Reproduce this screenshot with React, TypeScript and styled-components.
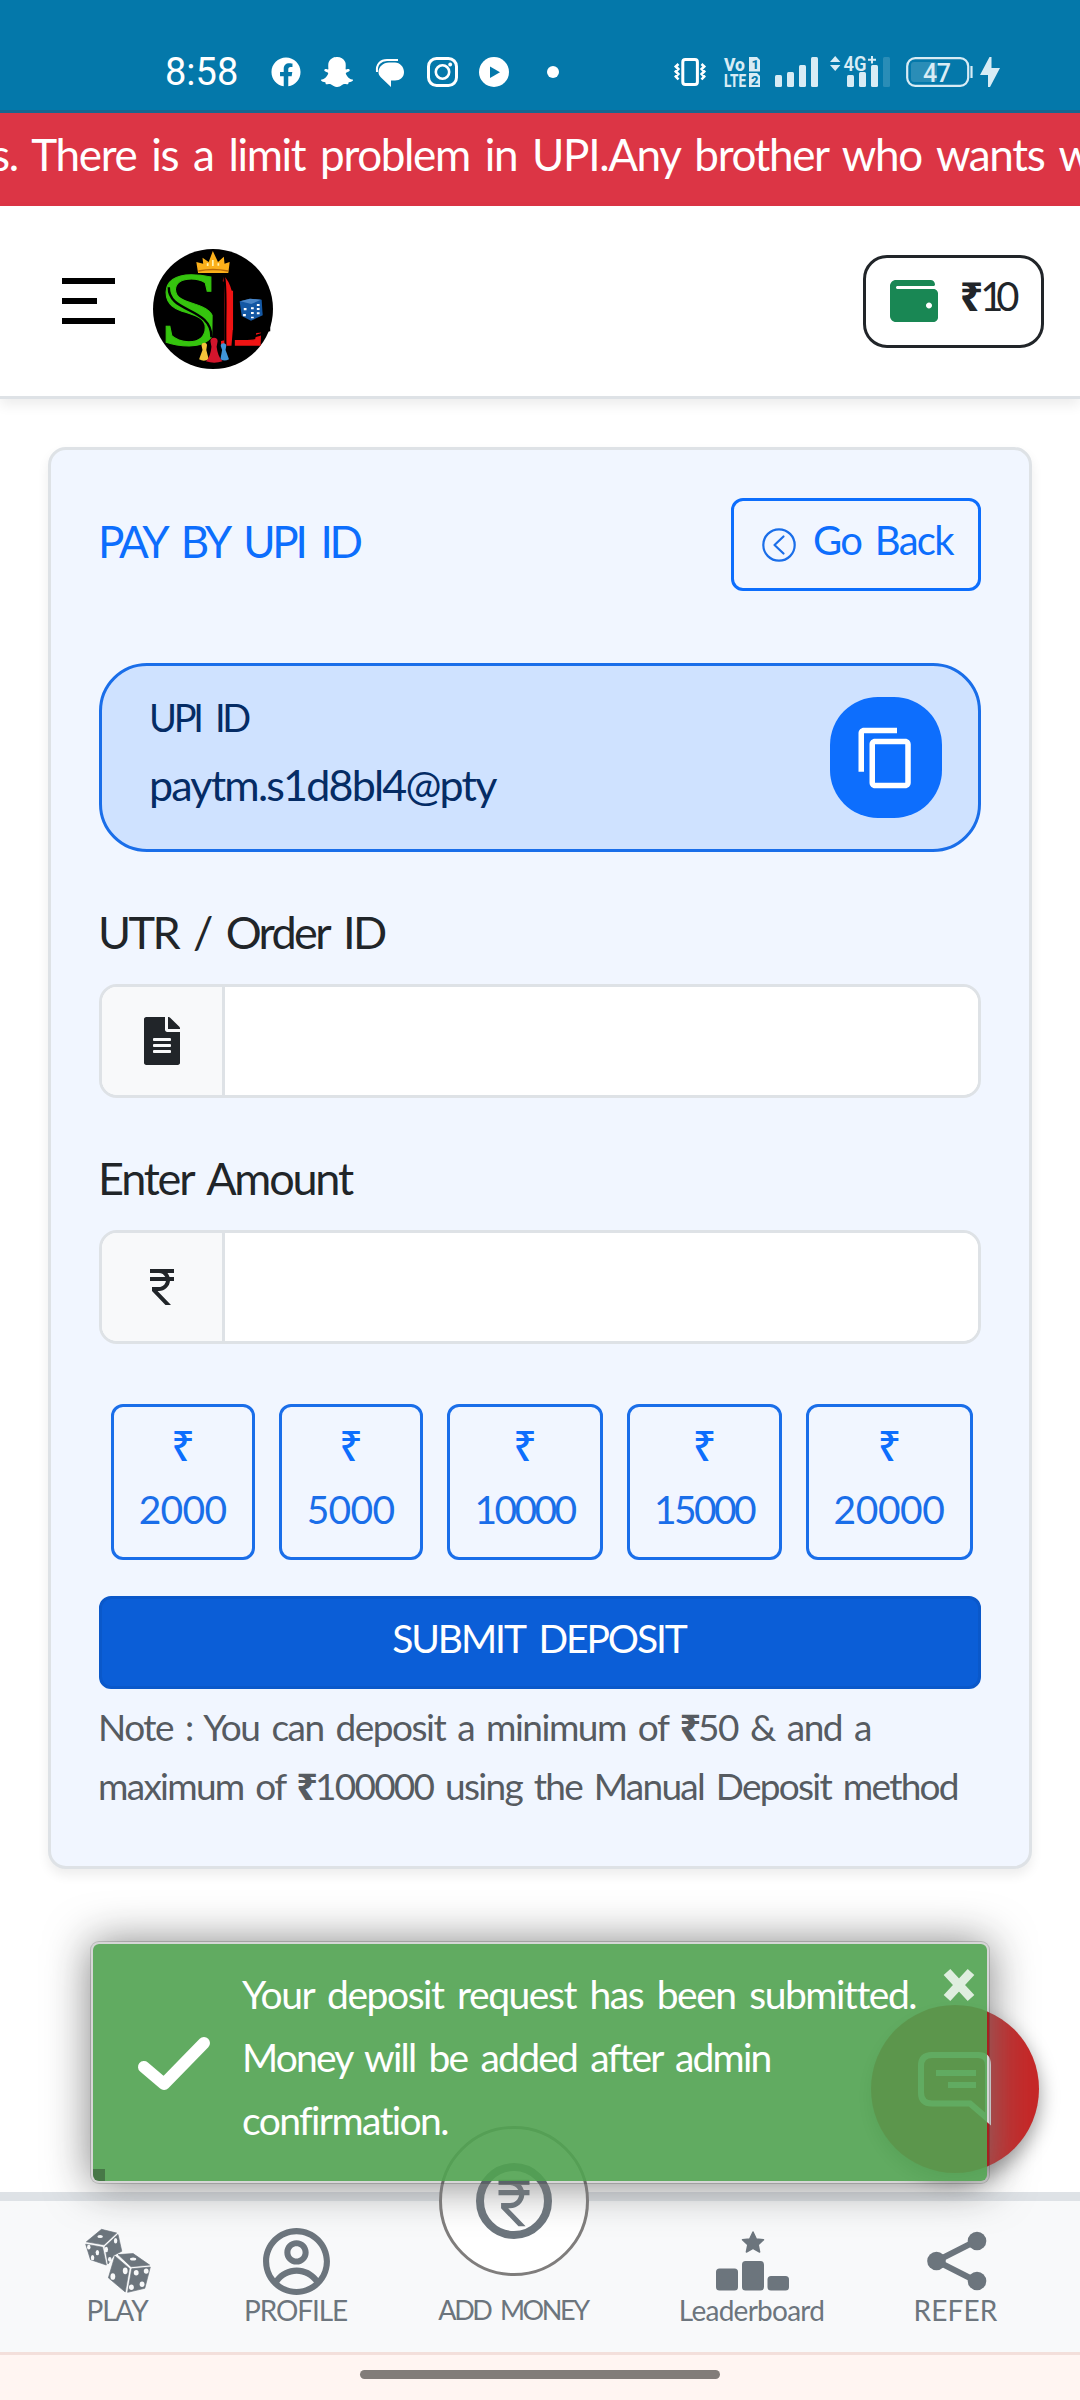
import React from 'react';
import styled, { createGlobalStyle } from 'styled-components';
import { FaFacebook, FaSnapchatGhost, FaWallet, FaFileAlt } from 'react-icons/fa';
import { CgProfile } from 'react-icons/cg';
import { MdContentCopy, MdCurrencyRupee } from 'react-icons/md';

const GlobalStyle = createGlobalStyle`
  * { box-sizing: border-box; }
  body { margin: 0; background: #fff; font-family: Lato, 'Open Sans', sans-serif; color: #212529; }
  button { font-family: inherit; background: none; cursor: pointer; }
  svg { display: block; flex: none; overflow: visible; }
`;

const Screen = styled.div`
  position: relative;
  width: 1080px;
  height: 2400px;
  overflow: hidden;
  display: flex;
  flex-direction: column;
`;

/* ---------- status bar ---------- */
const StatusBar = styled.div`
  height: 113px;
  flex: none;
  display: flex;
  justify-content: space-between;
  padding: 57px 80px 0 165px;
  background: #0478aa;
  border-bottom: 3px solid #17668f;
  color: #fff;
`;
const StatusGroup = styled.div`
  display: flex;
  align-items: center;
  height: 30px;
`;
const Slot = styled.span<{ $before: number }>`
  margin-left: ${(p) => p.$before}px;
`;
const Clock = styled.span`
  width: 86px;
  font: 400 38px/30px Roboto, sans-serif;
`;
const MoreDot = styled.span`
  display: block;
  width: 12px;
  height: 12px;
  border-radius: 50%;
  background: #fff;
`;

/* ---------- marquee and header ---------- */
const Marquee = styled.div`
  height: 93px;
  flex: none;
  padding-bottom: 12px;
  background: #dc3545;
  color: #fff;
  overflow: hidden;
  display: flex;
  align-items: center;
`;
const MarqueeText = styled.span`
  margin-left: -9px;
  white-space: nowrap;
  font-size: 44px;
  letter-spacing: -1.35px;
  word-spacing: 5px;
`;
const Header = styled.header`
  height: 193px;
  flex: none;
  display: flex;
  align-items: center;
  padding: 0 36px 0 62px;
  border-bottom: 3px solid #dee2e6;
  box-shadow: 0 6px 12px rgba(0, 0, 0, 0.075);
`;
const Menu = styled.button`
  display: flex;
  flex-direction: column;
  gap: 14px;
  width: 53px;
  padding: 0;
  border: 0;
`;
const MenuLine = styled.span<{ $w: number }>`
  width: ${(p) => p.$w}px;
  height: 6px;
  background: #000;
`;
const LogoBox = styled.div`
  margin: 15px auto 0 38px;
`;
const WalletButton = styled.button`
  width: 181px;
  height: 93px;
  display: flex;
  align-items: center;
  gap: 22px;
  padding: 0 0 0 24px;
  border: 3px solid #212529;
  border-radius: 24px;
  color: #198754;
`;
const WalletAmount = styled.span`
  padding-bottom: 10px;
  color: #212529;
  font-size: 40px;
  line-height: 50px;
  letter-spacing: -7px;
  white-space: nowrap;
`;
const Rupee = styled.span`
  font-family: 'Noto Sans', sans-serif;
  font-weight: 800;
  letter-spacing: -3px;
`;

/* ---------- deposit card ---------- */
const Card = styled.main`
  margin: 48px 48px 0;
  height: 1422px;
  flex: none;
  padding: 48px;
  display: flex;
  flex-direction: column;
  border: 3px solid #dee2e6;
  border-radius: 18px;
  background: #f1f6ff;
  box-shadow: 0 6px 12px rgba(0, 0, 0, 0.075);
`;
const CardHeader = styled.div`
  height: 93px;
  display: flex;
  justify-content: space-between;
  align-items: center;
`;
const CardTitle = styled.h1`
  margin: 0 0 0 -1px;
  padding-bottom: 8px;
  color: #0d6efd;
  font-weight: 400;
  font-size: 44px;
  letter-spacing: -3.3px;
  word-spacing: 8px;
`;
const BackButton = styled.button`
  width: 250px;
  height: 93px;
  display: flex;
  align-items: center;
  gap: 17px;
  padding: 0 0 0 28px;
  border: 3px solid #0d6efd;
  border-radius: 12px;
  color: #0d6efd;
  font-size: 40px;
  letter-spacing: -1.7px;
  word-spacing: 5px;
  white-space: nowrap;
`;
const BackText = styled.span`
  padding-bottom: 10px;
`;
const UpiBox = styled.section`
  margin-top: 72px;
  height: 189px;
  display: flex;
  justify-content: space-between;
  padding: 20px 36px 0 47px;
  border: 3px solid #1a6ee9;
  border-radius: 48px;
  background: #cfe2ff;
  color: #052c65;
`;
const UpiLabel = styled.div`
  font-size: 38px;
  line-height: 62px;
  letter-spacing: -3.3px;
  word-spacing: 8px;
`;
const UpiValue = styled.div`
  margin-top: 4px;
  font-size: 43px;
  line-height: 66px;
  letter-spacing: -1.8px;
`;
const CopyButton = styled.button`
  margin-top: 11px;
  width: 112px;
  height: 121px;
  display: flex;
  align-items: center;
  justify-content: center;
  border: 0;
  border-radius: 48px;
  background: #0d6efd;
  color: #fff;
`;
const FieldLabel = styled.label<{ $space: number }>`
  margin: 50px 0 22px -1px;
  font-size: 45px;
  line-height: 60px;
  letter-spacing: ${(p) => p.$space}px;
  word-spacing: 6px;
`;
const InputGroup = styled.div`
  height: 114px;
  flex: none;
  display: flex;
  border: 3px solid #dee2e6;
  border-radius: 18px;
  overflow: hidden;
  background: #fff;
`;
const Addon = styled.span`
  width: 123px;
  flex: none;
  display: flex;
  align-items: center;
  justify-content: center;
  border-right: 3px solid #dee2e6;
  background: #f8f9fa;
`;
const Input = styled.input`
  flex: 1;
  border: 0;
  outline: 0;
  background: #fff;
  font-size: 48px;
`;
const Presets = styled.div`
  display: flex;
  gap: 24px;
  margin: 60px 0 0 12px;
`;
const Preset = styled.button<{ $w: number }>`
  width: ${(p) => p.$w}px;
  height: 156px;
  flex: none;
  display: flex;
  flex-direction: column;
  align-items: center;
  padding: 7px 0 0;
  border: 3px solid #1a6ee9;
  border-radius: 12px;
  color: #1a6ee9;
`;
const PresetSign = styled.span`
  font: 500 41px/63px 'Noto Sans', sans-serif;
  color: #0d6efd;
`;
const PresetValue = styled.span<{ $space: number }>`
  margin-top: 1px;
  margin-left: -1px;
  font-size: 39px;
  line-height: 63px;
  letter-spacing: ${(p) => p.$space}px;
`;
const Submit = styled.button`
  margin-top: 36px;
  height: 93px;
  padding: 0 2px 10px 0;
  border: 3px solid #0a58ca;
  border-radius: 12px;
  background: #0b5ed7;
  color: #fff;
  font-size: 39px;
  letter-spacing: -2.1px;
  word-spacing: 7px;
`;
const Note = styled.p`
  margin: 8px 0 0 -1px;
  color: #565b61;
  font-size: 37px;
  line-height: 59px;
`;
const NoteLine = styled.span<{ $space: number }>`
  display: block;
  height: 59px;
  white-space: nowrap;
  word-spacing: 4px;
  letter-spacing: ${(p) => p.$space}px;
`;

/* ---------- bottom navigation ---------- */
const Nav = styled.nav`
  margin-top: auto;
  height: 160px;
  flex: none;
  display: grid;
  grid-template-columns: 178px 179px 256px 221px 187px;
  padding-left: 29px;
  border-top: 9px solid #dee2e6;
  background: #f8f9fa;
  color: #6c757d;
`;
const NavItem = styled.a`
  position: relative;
  display: flex;
  flex-direction: column;
  align-items: center;
  padding-top: 30px;
`;
const NavIcon = styled.span`
  height: 60px;
  display: flex;
  align-items: center;
`;
const NavLabel = styled.span<{ $space: number; $size?: number }>`
  font-size: ${(p) => p.$size ?? 28}px;
  line-height: 38px;
  letter-spacing: ${(p) => p.$space}px;
  word-spacing: 5px;
  margin-left: -2px;
  white-space: nowrap;
`;
const AddCircle = styled.span`
  position: absolute;
  top: -75px;
  left: 53px;
  width: 150px;
  height: 150px;
  display: flex;
  align-items: center;
  justify-content: center;
  border: 3px solid #7f7d7c;
  border-radius: 50%;
  background: #fff;
`;
const AddRing = styled.span`
  width: 76px;
  height: 76px;
  display: flex;
  align-items: center;
  justify-content: center;
  padding-top: 4px;
  border: 8px solid #6c757d;
  border-radius: 50%;
`;
const GestureBar = styled.div`
  height: 48px;
  flex: none;
  display: flex;
  justify-content: center;
  padding-top: 15px;
  border-top: 3px solid #f3dfdb;
  background: #fff5f2;
`;
const Handle = styled.span`
  width: 360px;
  height: 9px;
  border-radius: 5px;
  background: #827c79;
`;

/* ---------- floating elements ---------- */
const ChatButton = styled.button`
  position: absolute;
  left: 871px;
  top: 2005px;
  width: 168px;
  height: 168px;
  display: flex;
  justify-content: center;
  align-items: center;
  padding: 0;
  border: 0;
  border-radius: 50%;
  background: #c62828;
  box-shadow: 0 8px 20px rgba(0, 0, 0, 0.4);
`;
const Toast = styled.div`
  position: absolute;
  left: 90px;
  top: 1941px;
  width: 900px;
  height: 243px;
  display: flex;
  padding: 19px 0 0 45px;
  border: 3px solid rgba(0, 0, 0, 0.175);
  border-radius: 9px;
  background: #51a351;
  background-clip: padding-box;
  box-shadow: 0 1px 44px #777;
  opacity: 0.9;
  color: #fff;
`;
const ToastCheck = styled.span`
  width: 72px;
  padding-top: 72px;
  margin-right: 32px;
`;
const ToastText = styled.div`
  font-size: 39px;
  line-height: 63px;
  word-spacing: 5px;
`;
const ToastLine = styled.div<{ $space: number }>`
  white-space: nowrap;
  letter-spacing: ${(p) => p.$space}px;
`;
const ToastClose = styled.button`
  position: absolute;
  right: 13px;
  top: 24px;
  padding: 0;
  border: 0;
`;
const ToastProgress = styled.span`
  position: absolute;
  left: 0;
  bottom: 0;
  width: 12px;
  height: 12px;
  border-bottom-left-radius: 6px;
  background: rgba(0, 0, 0, 0.35);
`;

const ICE = '#d8ecf5';

const Messages = () => (
  <svg width="28" height="29" viewBox="0 0 28 29">
    <path d="M1 14C0 6 5 2 11 2H22" fill="none" stroke="#fff" strokeWidth="2" />
    <path d="M13 4.500H19C24 4.500 28 9 28 14C28 19.500 24 22.500 19 22.500H15V29L5 19.500C3 17.500 2.500 16 2.500 14C2.500 9 7 4.500 13 4.500Z" fill="#fff" />
  </svg>
);
const Camera = () => (
  <svg width="31" height="30" viewBox="0 0 31 30">
    <rect x="1.500" y="1.500" width="28" height="27" rx="8" fill="none" stroke="#fff" strokeWidth="3" />
    <circle cx="15.500" cy="15" r="6.700" fill="none" stroke="#fff" strokeWidth="2.600" />
    <circle cx="23.200" cy="7.500" r="1.900" fill="#fff" />
  </svg>
);
const PlayDisc = () => (
  <svg width="30" height="30" viewBox="0 0 30 30">
    <circle cx="15" cy="15" r="15" fill="#fff" />
    <path d="M11 9.500V21L21 15.200Z" fill="#0478aa" />
  </svg>
);
const Vibrate = () => (
  <svg width="32" height="30" viewBox="0 0 32 30" fill="none" stroke="#fff">
    <rect x="8.800" y="2.500" width="14.600" height="25" rx="2.500" strokeWidth="3" />
    <path d="M4.500 7 1.800 9.500 4.300 12 1.800 14.500 4.300 17 1.800 19.500 4.500 22.500M27.500 7 30.200 9.500 27.700 12 30.200 14.500 27.700 17 30.200 19.500 27.500 22.500" strokeWidth="2.600" />
  </svg>
);
const VoLte = () => (
  <svg width="36" height="30" viewBox="0 0 36 30" fontFamily="Roboto, sans-serif" fontWeight="800" fill={ICE}>
    <text x="0" y="14" fontSize="19" textLength="21" lengthAdjust="spacingAndGlyphs">Vo</text>
    <text x="0" y="30" fontSize="19" textLength="22" lengthAdjust="spacingAndGlyphs">LTE</text>
    <path d="M25 0H33L36 3V14.500H25ZM25 16H33L36 19V30H25Z" />
    <text x="27.500" y="12" fontSize="13" fill="#0478aa">1</text>
    <text x="27" y="27.500" fontSize="13" fill="#0478aa">2</text>
  </svg>
);
const Signal = () => (
  <svg width="43" height="30" viewBox="0 0 43 30" fill={ICE}>
    <rect x="0" y="18" width="7" height="12" rx="1.500" />
    <rect x="12" y="15" width="7" height="15" rx="1.500" />
    <rect x="24" y="8" width="7" height="22" rx="1.500" />
    <rect x="36" y="0" width="7" height="30" rx="1.500" />
  </svg>
);
const Signal4G = () => (
  <svg width="60" height="30" viewBox="0 2 60 30" fill={ICE}>
    <path d="M0 7 5.200 1 10.400 7ZM0 10 5.200 16 10.400 10Z" />
    <text x="13.500" y="15.500" fontFamily="Roboto, sans-serif" fontSize="21" fontWeight="600" textLength="23" lengthAdjust="spacingAndGlyphs">4G</text>
    <path d="M38 4.700H46M42 1V8.400" stroke={ICE} strokeWidth="2" />
    <rect x="17" y="20" width="7" height="12" rx="1.500" />
    <rect x="29" y="17" width="7" height="15" rx="1.500" />
    <rect x="41" y="10" width="7" height="22" rx="1.500" />
    <rect x="53" y="2" width="7" height="30" rx="1.500" opacity=".18" />
  </svg>
);
const Battery = () => (
  <svg width="68" height="30" viewBox="0 0 68 30">
    <rect x="5" y="5" width="26" height="20" rx="3" fill={ICE} opacity=".18" />
    <rect x="1.200" y="1.200" width="61" height="27.600" rx="8" fill="none" stroke={ICE} strokeWidth="2.200" />
    <path d="M65.500 9V21" stroke={ICE} strokeWidth="2.200" />
    <text x="17" y="24.500" fontFamily="Roboto, sans-serif" fontSize="25" fontWeight="500" fill={ICE} textLength="28">47</text>
  </svg>
);
const Bolt = () => (
  <svg width="20" height="30" viewBox="0 0 20 30">
    <path d="M9.500 0 0 18H8V30H10L20 11H11.500V0Z" fill={ICE} />
  </svg>
);

const Logo = () => (
  <svg width="120" height="120" viewBox="444 147 349 360" preserveAspectRatio="none">
    <ellipse cx="618.500" cy="327" rx="174.500" ry="180" fill="#000" />
    <g fontFamily="'Liberation Serif', serif">
      <text x="460" y="434" fontSize="316" fill="#35c40e" stroke="#35c40e" strokeWidth="3" textLength="184" lengthAdjust="spacingAndGlyphs">S</text>
      <text x="626" y="434" fontSize="312" fill="#f01414" stroke="#f01414" strokeWidth="4" textLength="146" lengthAdjust="spacingAndGlyphs">L</text>
    </g>
    <path d="M490 262C488 340 615 320 614 412" fill="none" stroke="#000" strokeWidth="7" />
    <path d="M620 212H650Q640 300 642 440H616ZM662 212H720V272H673Q664 240 650 228ZM690 300H785V394Q740 402 690 400ZM676 390H682V440H672Z" fill="#000" />
    <path d="M650 226C660 270 652 350 655 445M684 416C715 416 745 410 775 396" fill="none" stroke="#000" strokeWidth="6" />
    <path d="M570 186 590 191 588 173 606 186 618 153 633 186 650 170 652 191 667 186 663 219H575Z" fill="#fbb01a" />
    <path d="M576 213Q618 204 662 213" fill="none" stroke="#b96a08" strokeWidth="4" />
    <path d="M618 180V198M603 190V198M634 190V197" stroke="#fff3b0" strokeWidth="5" />
    <path d="M696 304 726 296 760 299 763 346 729 362 702 348Z" fill="#1458a4" />
    <path d="M698 304 726 296 758 299 730 312Z" fill="#4b86c6" />
    <path d="M733 322V328M733 336V342M733 350V355M750 312V318M750 324V330M750 337V343M712 324V331M710 342V349" stroke="#fff" strokeWidth="8" />
    <path d="M585 436A8 8 0 1 1 601 436L599 450 606 478Q592 486 578 478L588 450Z" fill="#f4c33a" />
    <path d="M641 438A8 8 0 1 1 657 438L655 450 665 478Q652 485 640 478L645 450Z" fill="#3f95d8" />
    <path d="M611 424A10.500 10.500 0 1 1 632 424L629 440Q632 468 646 484Q622 492 598 484Q612 468 614 440Z" fill="#d3152c" />
  </svg>
);

const BackIcon = () => (
  <svg width="34" height="34" viewBox="0 0 34 34" fill="none" stroke="#1a6ee9" strokeWidth="2.200">
    <circle cx="17" cy="17" r="15.700" />
    <path d="M21.500 8.500 12.500 17 21.500 25.500" strokeLinecap="round" strokeLinejoin="round" />
  </svg>
);

const Dice = () => (
  <svg width="66" height="64" viewBox="72 990 192 190" preserveAspectRatio="none">
    <g fill="#6c757d" stroke="#6c757d" strokeWidth="2" strokeLinejoin="round">
      <path d="M120 991 164 1002 127 1037 76 1028ZM74 1035 123 1044 134 1097 88 1081ZM130 1042 168 1006 179 1056 156 1068 139 1094Z" />
      <path d="M168 1066 212 1063 260 1097 206 1102ZM159 1070 201 1107 189 1177 140 1135ZM208 1108 262 1103 246 1166 196 1178Z" />
    </g>
    <g fill="#f8f9fa">
      <ellipse cx="116" cy="1012" rx="8" ry="4.500" />
      <ellipse cx="83" cy="1044" rx="5" ry="7" />
      <ellipse cx="108" cy="1060" rx="5" ry="8" />
      <ellipse cx="94" cy="1075" rx="5" ry="8" />
      <ellipse cx="161" cy="1025" rx="5" ry="8" />
      <ellipse cx="134" cy="1051" rx="5" ry="8" />
      <ellipse cx="144" cy="1080" rx="5" ry="7" />
      <ellipse cx="212" cy="1079" rx="9" ry="4.500" />
      <ellipse cx="189" cy="1114" rx="7" ry="10" />
      <ellipse cx="153" cy="1131" rx="7" ry="10" />
      <ellipse cx="221" cy="1120" rx="7" ry="8" />
      <ellipse cx="250" cy="1115" rx="7" ry="8" />
      <ellipse cx="207" cy="1163" rx="7" ry="8" />
      <ellipse cx="238" cy="1154" rx="7" ry="8" />
    </g>
  </svg>
);
const Podium = () => (
  <svg width="73" height="60" viewBox="0 0 73 60" fill="#6c757d">
    <path d="M37 1 40.300 8 47.500 8.800 42.200 13.800 43.600 21 37 17.400 30.400 21 31.800 13.800 26.500 8.800 33.700 8Z" stroke="#6c757d" strokeWidth="1.500" strokeLinejoin="round" />
    <rect x="0" y="37.500" width="22" height="22" rx="3.500" />
    <rect x="26" y="30" width="22" height="29.500" rx="3.500" />
    <rect x="51.500" y="45" width="21.500" height="14.500" rx="3.500" />
  </svg>
);
const Share = () => (
  <svg width="60" height="60" viewBox="0 0 60 60" fill="#6c757d">
    <path d="M50 9.500 9.500 30 50 50.500" fill="none" stroke="#6c757d" strokeWidth="6" />
    <circle cx="9.500" cy="30" r="9.300" />
    <circle cx="50" cy="10" r="9.300" />
    <circle cx="50" cy="50" r="9.300" />
  </svg>
);
const ChatIcon = () => (
  <svg width="74" height="74" viewBox="0 0 74 74" fill="none" stroke="#fff" strokeWidth="6">
    <path d="M14 3H60Q70 3 70 13V67L52 51.500H14Q3 51.500 3 40.500V14Q3 3 14 3Z" strokeMiterlimit="3" />
    <path d="M18 21H58M30 33H58" />
  </svg>
);
const Check = () => (
  <svg width="72" height="56" viewBox="0 0 72 56">
    <path d="M6 32 26 49 66 8" fill="none" stroke="#fff" strokeWidth="12" strokeLinecap="round" strokeLinejoin="round" />
  </svg>
);
const Cross = () => (
  <svg width="30" height="34" viewBox="0 0 30 34">
    <path d="M3 4 27 30M27 4 3 30" stroke="#fff" strokeOpacity=".8" strokeWidth="9" />
  </svg>
);

const presets = [
  { value: '2000', width: 144, space: -0.7 },
  { value: '5000', width: 144, space: -0.7 },
  { value: '10000', width: 156, space: -2.6 },
  { value: '15000', width: 155, space: -2.6 },
  { value: '20000', width: 167, space: -0.4 },
];

export default function App() {
  return (
    <>
      <GlobalStyle />
      <Screen>
        <StatusBar>
          <StatusGroup>
            <Clock>8:58</Clock>
            <Slot $before={20}><FaFacebook size={30} /></Slot>
            <Slot $before={20}><FaSnapchatGhost size={32} /></Slot>
            <Slot $before={23}><Messages /></Slot>
            <Slot $before={23}><Camera /></Slot>
            <Slot $before={21}><PlayDisc /></Slot>
            <Slot $before={38}><MoreDot /></Slot>
          </StatusGroup>
          <StatusGroup>
            <Vibrate />
            <Slot $before={18}><VoLte /></Slot>
            <Slot $before={15}><Signal /></Slot>
            <Slot $before={12}><Signal4G /></Slot>
            <Slot $before={16}><Battery /></Slot>
            <Slot $before={6}><Bolt /></Slot>
          </StatusGroup>
        </StatusBar>

        <Marquee>
          <MarqueeText>s. There is a limit problem in UPI.Any brother who wants w</MarqueeText>
        </Marquee>

        <Header>
          <Menu aria-label="Menu">
            <MenuLine $w={53} />
            <MenuLine $w={35} />
            <MenuLine $w={53} />
          </Menu>
          <LogoBox>
            <Logo />
          </LogoBox>
          <WalletButton>
            <FaWallet size={48} />
            <WalletAmount>
              <Rupee>₹</Rupee>10
            </WalletAmount>
          </WalletButton>
        </Header>

        <Card>
          <CardHeader>
            <CardTitle>PAY BY UPI ID</CardTitle>
            <BackButton>
              <BackIcon />
              <BackText>Go Back</BackText>
            </BackButton>
          </CardHeader>

          <UpiBox>
            <div>
              <UpiLabel>UPI ID</UpiLabel>
              <UpiValue>paytm.s1d8bl4@pty</UpiValue>
            </div>
            <CopyButton aria-label="Copy">
              <MdContentCopy size={66} />
            </CopyButton>
          </UpiBox>

          <FieldLabel $space={-2.6}>UTR / Order ID</FieldLabel>
          <InputGroup>
            <Addon>
              <FaFileAlt size={48} />
            </Addon>
            <Input />
          </InputGroup>

          <FieldLabel $space={-2.2}>Enter Amount</FieldLabel>
          <InputGroup>
            <Addon>
              <MdCurrencyRupee size={48} />
            </Addon>
            <Input />
          </InputGroup>

          <Presets>
            {presets.map((p) => (
              <Preset key={p.value} $w={p.width}>
                <PresetSign>₹</PresetSign>
                <PresetValue $space={p.space}>{p.value}</PresetValue>
              </Preset>
            ))}
          </Presets>
          <Submit>SUBMIT DEPOSIT</Submit>
          <Note>
            <NoteLine $space={-1.5}>
              Note : You can deposit a minimum of <Rupee>₹</Rupee>50 &amp; and a
            </NoteLine>
            <NoteLine $space={-1.72}>
              maximum of <Rupee>₹</Rupee>100000 using the Manual Deposit method
            </NoteLine>
          </Note>
        </Card>

        <Nav>
          <NavItem>
            <NavIcon><Dice /></NavIcon>
            <NavLabel $space={-1.2}>PLAY</NavLabel>
          </NavItem>
          <NavItem>
            <NavIcon><CgProfile size={73} /></NavIcon>
            <NavLabel $space={-1.1}>PROFILE</NavLabel>
          </NavItem>
          <NavItem>
            <AddCircle>
              <AddRing>
                <MdCurrencyRupee size={62} />
              </AddRing>
            </AddCircle>
            <NavIcon />
            <NavLabel $space={-2.4} $size={27}>ADD MONEY</NavLabel>
          </NavItem>
          <NavItem>
            <NavIcon><Podium /></NavIcon>
            <NavLabel $space={-0.75}>Leaderboard</NavLabel>
          </NavItem>
          <NavItem>
            <NavIcon><Share /></NavIcon>
            <NavLabel $space={0.1}>REFER</NavLabel>
          </NavItem>
        </Nav>
        <GestureBar>
          <Handle />
        </GestureBar>

        <ChatButton aria-label="Chat">
          <ChatIcon />
        </ChatButton>
        <Toast>
          <ToastCheck><Check /></ToastCheck>
          <ToastText>
            <ToastLine $space={-1.45}>Your deposit request has been submitted.</ToastLine>
            <ToastLine $space={-1.8}>Money will be added after admin</ToastLine>
            <ToastLine $space={-1.6}>confirmation.</ToastLine>
          </ToastText>
          <ToastClose aria-label="Close"><Cross /></ToastClose>
          <ToastProgress />
        </Toast>
      </Screen>
    </>
  );
}
